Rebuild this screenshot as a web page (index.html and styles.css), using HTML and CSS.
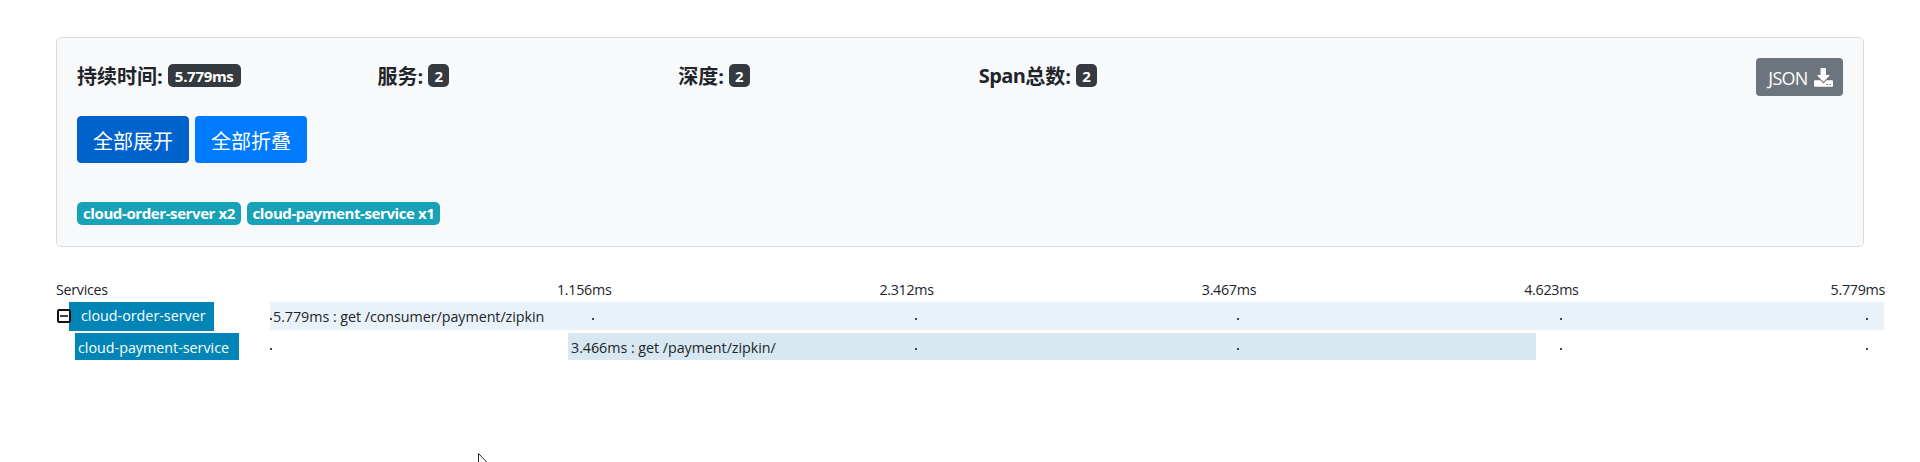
FILE: index.html
```html
<!DOCTYPE html>
<html lang="zh-CN">
<head>
<meta charset="utf-8">
<title>Zipkin</title>
<link rel="stylesheet" href="styles.css">
</head>
<body>
<section class="card">
  <div class="summary">
    <div class="stat">持续时间: <span class="badge dark wide">5.779ms</span></div>
    <div class="stat">服务: <span class="badge dark">2</span></div>
    <div class="stat">深度: <span class="badge dark">2</span></div>
    <div class="stat"><span class="span-word">Span</span>总数: <span class="badge dark">2</span></div>
    <button class="json"><span>JSON</span>
      <svg class="download" viewBox="0 0 19 19"><path fill="#fff" d="M6.500 1q0-1 1-1h3.500q1 0 1 1v6h3.200q.8.100.2.800L9.500 14 3.500 7.800q-.6-.7.200-.8h2.800z"/><path fill="#fff" d="M1 12.200h5.300l3.200 3.200 3.200-3.200H18q1 0 1 1v4.500q0 1-1 1H1q-1 0-1-1v-4.500q0-1 1-1z"/><path fill="#6c757d" d="M12.500 16h1.500v1h-1.500zM15.200 16h1.500v1h-1.500z"/></svg>
    </button>
  </div>
  <div class="actions"><button class="btn active">全部展开</button><button class="btn">全部折叠</button></div>
  <div class="tags"><span class="badge info order">cloud-order-server x2</span><span class="badge info payment">cloud-payment-service x1</span></div>
</section>
<section class="trace">
  <div class="row head">
    <div class="services">Services</div>
    <div class="track ticks"><span></span><span>1.156ms</span><span>2.312ms</span><span>3.467ms</span><span>4.623ms</span><span class="last">5.779ms</span></div>
  </div>
  <div class="row first">
    <div class="name-cell"><svg class="toggle" viewBox="0 0 14 14"><rect x="1" y="1" width="12" height="12" rx="1" fill="#fff" stroke="#111" stroke-width="2"/><path d="M3 7h8" stroke="#111" stroke-width="1.600"/></svg><span class="name parent">cloud-order-server</span></div>
    <div class="track">
      <div class="bar"><span>5.779ms : get /consumer/payment/zipkin</span></div>
      <div class="dots"><i></i><i></i><i></i><i></i><i></i><i class="last"></i></div>
    </div>
  </div>
  <div class="row second">
    <div class="name-cell"><span class="name child">cloud-payment-service</span></div>
    <div class="track">
      <div class="bar inner"><span>3.466ms : get /payment/zipkin/</span></div>
      <div class="dots"><i></i><i></i><i></i><i></i><i></i><i class="last"></i></div>
    </div>
  </div>
</section>
<svg class="cursor" viewBox="0 0 12 19"><path d="M.5.500v17l4-4 3 5 2-1-2-5h4.500z" fill="#fff" stroke="#222"/></svg>
</body>
</html>
```
FILE: styles.css
```css
* { box-sizing: border-box; }
body {
  margin: 0;
  height: 462px;
  overflow: hidden;
  padding: 37px 36px 0 56px;
  background: #fff;
  color: #212529;
  font-family: "Open Sans", "Noto Sans CJK SC", sans-serif;
}
button { border: 0; margin: 0; font-family: inherit; color: #fff; }
.card {
  width: 1808px;
  height: 210px;
  padding: 20px 20px 0;
  border: 1px solid #d8dbdf;
  border-radius: 5px;
  background: #f8f9fb;
}
.summary { display: flex; height: 58px; }
.stat {
  display: flex;
  align-items: center;
  flex: 0 0 300.6px;
  height: 34px;
  font-size: 20px;
  font-weight: 700;
  white-space: nowrap;
}
.span-word { letter-spacing: -.6px; }
.badge {
  display: flex;
  align-items: center;
  justify-content: center;
  height: 23px;
  padding-bottom: 1px;
  border-radius: 5px;
  color: #fff;
  font-size: 15px;
  font-weight: 700;
  white-space: nowrap;
}
.dark { width: 21px; margin: 1px 0 0 5px; padding-bottom: 0; background: #343a40; }
.wide { width: 73px; letter-spacing: -.3px; }
.json {
  display: flex;
  align-items: center;
  gap: 5px;
  width: 87px;
  height: 38px;
  margin-left: auto;
  padding: 2px 0 0 11px;
  border-radius: 4px;
  background: #6c757d;
  font-size: 18px;
}
.json span { width: 42px; letter-spacing: -.7px; }
.download { flex: none; width: 19px; height: 19px; margin-top: -2px; }
.actions { display: flex; gap: 6px; height: 86px; }
.btn {
  width: 112px;
  height: 47px;
  padding: 1px 0 0;
  border-radius: 4px;
  background: #007bff;
  font-size: 20px;
  font-weight: 400;
}
.btn.active { background: #0062cc; border: 1px solid #005cbf; }
.tags { display: flex; gap: 6px; }
.info { background: #17a2b8; }
.order { width: 164px; letter-spacing: -.4px; }
.payment { width: 193px; letter-spacing: -.4px; }
.trace { padding-top: 33px; font-size: 14.300px; white-space: nowrap; }
.row { display: grid; grid-template-columns: 214px 1614px; }
.head { height: 22px; line-height: 20px; letter-spacing: -.3px; }
.first { height: 31px; }
.track { position: relative; }
.ticks { display: flex; }
.ticks span { width: 322.400px; flex: none; }
.ticks span:first-child { width: 287px; }
.ticks .last { width: 54px; margin-left: -16px; }
.name-cell { display: flex; align-items: flex-start; }
.toggle { width: 14px; height: 14px; margin: 7px -2px 0 1px; z-index: 1; }
.name { background: #0085b6; color: #fff; }
.parent { width: 145px; height: 29px; padding-left: 12px; line-height: 28px; }
.child { width: 164px; height: 27px; margin-left: 19px; padding-left: 3px; line-height: 29px; }
.bar { height: 28px; padding-left: 3px; background: #eaf2f9; line-height: 29px; letter-spacing: -.04px; }
.inner { width: 968px; height: 27px; margin-left: 298px; background: #d8e8f2; line-height: 29px; }
.dots { position: absolute; left: 0; top: 16px; display: flex; }
.second .dots { top: 15px; }
.dots i { flex: none; width: 2px; height: 2px; margin-right: 320.400px; background: #444; }
.dots i:nth-child(5) { margin-right: 304px; }
.dots .last { margin-right: 0; }
.cursor { position: absolute; left: 478px; top: 453px; width: 12px; height: 19px; }
```
